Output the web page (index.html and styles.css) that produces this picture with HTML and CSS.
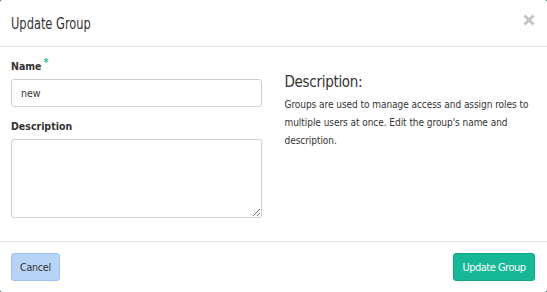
FILE: index.html
```html
<!DOCTYPE html>
<html>
<head>
<meta charset="utf-8">
<link rel="stylesheet" href="styles.css">
</head>
<body>
<div class="modal">
  <div class="modal-header">
    <h4 class="modal-title">Update Group</h4>
    <span class="close" aria-label="Close">
      <svg width="12" height="12" viewBox="0 0 12 12"><path d="M1.5 1.5 L10.5 10.5 M10.5 1.5 L1.5 10.5" stroke="#c4c4c4" stroke-width="3" stroke-linecap="butt"/></svg>
    </span>
  </div>
  <div class="modal-body">
    <div class="col-left">
      <label class="label">Name<span class="req">*</span></label>
      <input class="input" type="text" value="new">
      <label class="label label-desc">Description</label>
      <textarea class="textarea"></textarea>
    </div>
    <div class="col-right">
      <h3 class="help-title">Description:</h3>
      <p class="help-text">Groups are used to manage access and assign roles to multiple users at once. Edit the group's name and description.</p>
    </div>
  </div>
  <div class="modal-footer">
    <button class="btn btn-cancel">Cancel</button>
    <button class="btn btn-primary">Update Group</button>
  </div>
</div>
</body>
</html>
```
FILE: styles.css
```css
html, body {
  margin: 0;
  padding: 0;
  background: #0f4a45;
}
body {
  font-family: "DejaVu Sans Condensed", "DejaVu Sans", sans-serif;
  font-stretch: condensed;
  color: #333;
}
.modal {
  width: 547px;
  height: 292px;
  background: #fff;
  border-radius: 2px;
  display: flex;
  flex-direction: column;
  box-sizing: border-box;
}
.modal-header {
  height: 47px;
  box-sizing: border-box;
  border-bottom: 1px solid #e5e5e5;
  padding: 0 12px 0 11px;
  display: flex;
  align-items: center;
  justify-content: space-between;
}
.modal-title {
  margin: 2px 0 0 0;
  font-size: 16.5px;
  font-weight: normal;
  line-height: 20px;
  color: #333;
  transform: scaleX(0.77);
  transform-origin: left center;
}
.close {
  display: flex;
  margin-top: -6px;
}
.modal-body {
  flex: 1;
  display: flex;
  gap: 23px;
  padding: 11px 11px 0 11px;
}
.col-left, .col-right {
  width: 251px;
  display: flex;
  flex-direction: column;
}
.label {
  font-size: 10.5px;
  font-weight: bold;
  line-height: 16px;
  color: #333;
}
.req {
  color: #1abc9c;
  position: relative;
  top: -4px;
  margin-left: 2px;
}
.label-desc {
  margin-top: 11px;
}
.input {
  margin-top: 5px;
  height: 28px;
  box-sizing: border-box;
  border: 1px solid #cfcfcf;
  border-radius: 3px;
  padding: 0 9px;
  font-family: inherit;
  font-size: 10.5px;
  color: #333;
  outline: none;
}
.textarea {
  margin-top: 5px;
  height: 79px;
  box-sizing: border-box;
  border: 1px solid #cfcfcf;
  border-radius: 3px;
  resize: vertical;
  font-family: inherit;
  outline: none;
}
.col-right {
  padding-top: 14px;
  width: 252px;
}
.help-title {
  margin: 0;
  font-size: 15px;
  letter-spacing: -0.3px;
  font-weight: normal;
  line-height: 20px;
  color: #333;
}
.help-text {
  margin: 4px 0 0 0;
  font-size: 10px;
  letter-spacing: -0.05px;
  line-height: 18px;
  color: #333;
}
.modal-footer {
  height: 51px;
  box-sizing: border-box;
  border-top: 1px solid #e5e5e5;
  padding: 11px 12px 0 11px;
  display: flex;
  justify-content: space-between;
  align-items: flex-start;
}
.btn {
  height: 28px;
  box-sizing: border-box;
  border-radius: 3px;
  font-family: inherit;
  padding: 0;
  white-space: nowrap;
  cursor: pointer;
}
.btn-cancel {
  width: 49px;
  font-size: 10.5px;
  letter-spacing: -0.2px;
  background: #b7d4f6;
  border: 1px solid #9fc3ee;
  color: #333;
}
.btn-primary {
  width: 82px;
  font-size: 11px;
  letter-spacing: -0.5px;
  font-weight: normal;
  background: #17b897;
  border: 1px solid #12a786;
  color: #fff;
}
```
